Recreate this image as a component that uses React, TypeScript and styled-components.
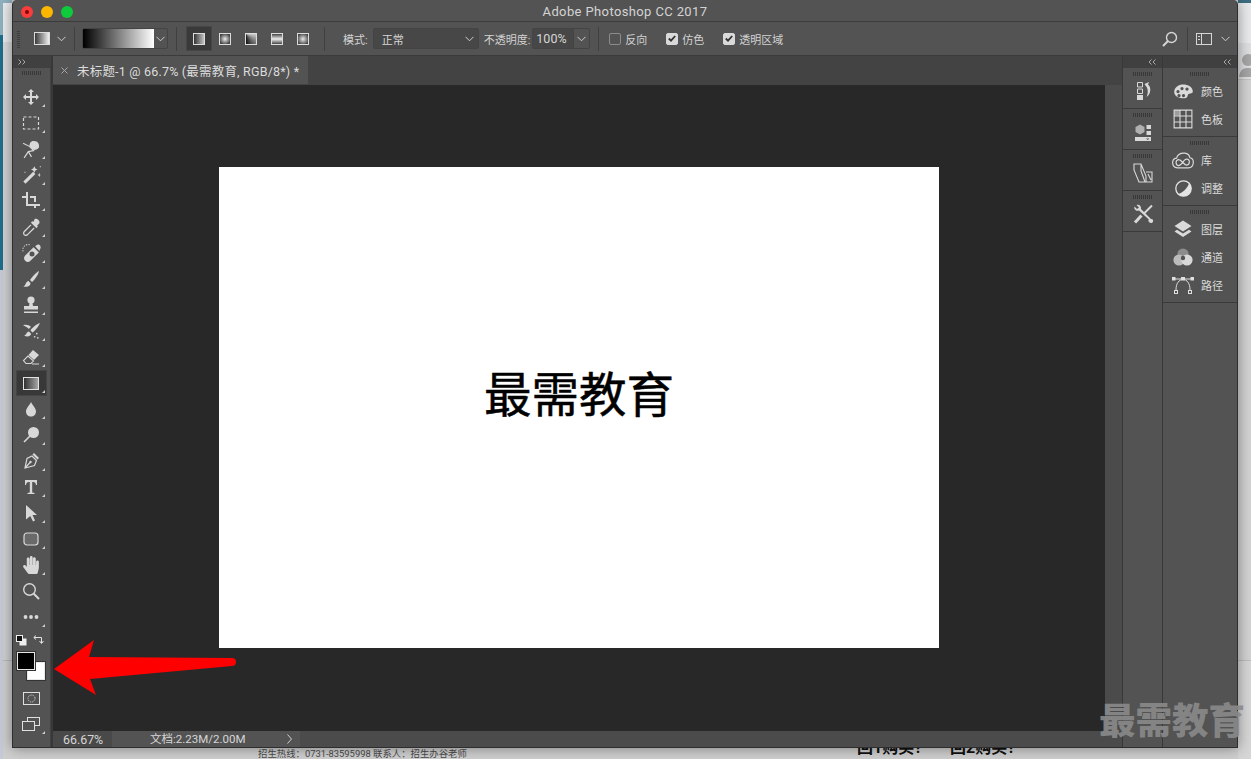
import React from 'react';
import styled, { createGlobalStyle } from 'styled-components';
import { FaHandPaper } from 'react-icons/fa';

const FONT = `Roboto, "Noto Sans CJK SC", sans-serif`;

const GlobalStyle = createGlobalStyle`
  html, body {
    margin: 0;
    padding: 0;
    width: 1251px;
    height: 759px;
    overflow: hidden;
    background: #d2d2d2;
    font-family: ${FONT};
  }
  * { box-sizing: border-box; }
`;

const Page = styled.div`
  position: relative;
  width: 1251px;
  height: 759px;
  overflow: hidden;
  display: grid;
  grid-template-columns: 12px 1226px 13px;
  grid-template-rows: 748px 11px;
`;

const LeftStrip = styled.div`
  grid-row: 1 / 3;
  display: flex;
`;

const StripColumn = styled.div<{ $w: number }>`
  width: ${(p) => p.$w}px;
  flex-shrink: 0;
  display: flex;
  flex-direction: column;
`;

const StripBand = styled.div<{ $h: number; $bg: string }>`
  height: ${(p) => p.$h}px;
  flex-shrink: 0;
  background: ${(p) => p.$bg};
`;

const RightStrip = styled.div`
  grid-column: 3;
  grid-row: 1 / 3;
  display: flex;
  flex-direction: column;
`;

const AvatarBand = styled.div`
  height: 37px;
  background: #dedfe0;
  border-bottom: 1px solid #c4c4c4;
  overflow: hidden;
  color: #a6a6a6;
`;

const Footer = styled.div`
  grid-column: 2;
  grid-row: 2;
  overflow: hidden;
  background: #cfcfcf;
  display: flex;
  align-items: flex-start;
  padding-left: 246px;
`;

const Hotline = styled.span`
  font-size: 9.4px;
  line-height: 11px;
  color: #4a4a4a;
  white-space: nowrap;
  width: 599px;
  flex-shrink: 0;
`;

const ClippedHeading = styled.span`
  font-size: 16px;
  line-height: 15px;
  font-weight: 700;
  color: #111;
  white-space: nowrap;
  margin-top: -8px;
  width: 93px;
  flex-shrink: 0;
`;

const Window = styled.div`
  position: relative;
  z-index: 1;
  grid-column: 2;
  grid-row: 1;
  background: #535353;
  border: 1px solid #2e2e2e;
  border-top: none;
  border-radius: 5px 5px 0 0;
  box-shadow: 0 0 14px rgba(0, 0, 0, 0.42);
  display: flex;
  flex-direction: column;
  color: #d6d6d6;
`;

const TitleBar = styled.div`
  height: 22px;
  flex-shrink: 0;
  border-bottom: 1px solid #3b3b3b;
  display: flex;
  align-items: center;
  justify-content: center;
  position: relative;
  padding-top: 1px;
  font-size: 13px;
  letter-spacing: 0.38px;
  color: #d4d4d4;
`;

const Lights = styled.div`
  position: absolute;
  left: 8px;
  top: 6px;
  display: flex;
  gap: 8px;
`;

const Light = styled.div<{ $c: string }>`
  width: 12px;
  height: 12px;
  border-radius: 50%;
  background: ${(p) => p.$c};
  display: flex;
  align-items: center;
  justify-content: center;
`;

const LightDot = styled.div`
  width: 4px;
  height: 4px;
  border-radius: 50%;
  background: #7a0a0a;
`;

const OptionsBar = styled.div`
  height: 34px;
  flex-shrink: 0;
  border-bottom: 1px solid #3b3b3b;
  display: flex;
  align-items: center;
  padding-left: 4px;
  font-size: 11px;
`;

const OptGrip = styled.div`
  width: 3px;
  height: 18px;
  margin-right: 14px;
  background: repeating-linear-gradient(0deg, #3e3e3e 0 1px, transparent 1px 2px);
`;

const PresetSwatch = styled.div`
  width: 16px;
  height: 13px;
  background: linear-gradient(90deg, #3a3a3a, #f0f0f0);
  border: 1px solid #dcdcdc;
`;

const Chevron = styled.svg<{ $ml?: number; $mr?: number }>`
  width: 9px;
  height: 6px;
  flex-shrink: 0;
  margin-left: ${(p) => p.$ml ?? 0}px;
  margin-right: ${(p) => p.$mr ?? 0}px;
  fill: none;
  stroke: #cfcfcf;
  stroke-width: 1;
`;

const Sep = styled.div<{ $ml: number; $mr: number }>`
  width: 1px;
  height: 24px;
  flex-shrink: 0;
  background: #404040;
  margin-left: ${(p) => p.$ml}px;
  margin-right: ${(p) => p.$mr}px;
`;

const GradientPicker = styled.div`
  width: 86px;
  height: 21px;
  border: 1px solid #444;
  border-radius: 2px;
  display: flex;
  align-items: center;
  overflow: hidden;
`;

const GradientFill = styled.div`
  width: 71px;
  height: 100%;
  background: linear-gradient(90deg, #000, #fff);
`;

const PickerArrow = styled.div`
  flex: 1;
  display: flex;
  align-items: center;
  justify-content: center;
`;

const GradType = styled.div<{ $active?: boolean }>`
  width: 26px;
  height: 25px;
  flex-shrink: 0;
  display: flex;
  align-items: center;
  justify-content: center;
  border-radius: 2px;
  background: ${(p) => (p.$active ? '#3a3a3a' : 'transparent')};
  box-shadow: ${(p) => (p.$active ? 'inset 0 0 0 1px #464646' : 'none')};
`;

const GradSwatch = styled.div<{ $kind: string }>`
  width: 12px;
  height: 12px;
  border: 1px solid #dcdcdc;
  background: ${(p) => p.$kind};
`;

const Label = styled.span<{ $ml?: number; $mr?: number }>`
  white-space: nowrap;
  flex-shrink: 0;
  color: #d2d2d2;
  margin-left: ${(p) => p.$ml ?? 0}px;
  margin-right: ${(p) => p.$mr ?? 0}px;
`;

const SelectBox = styled.div`
  width: 106px;
  height: 21px;
  flex-shrink: 0;
  background: #474747;
  border: 1px solid #444;
  border-radius: 2px;
  display: flex;
  align-items: center;
  justify-content: space-between;
  padding: 0 4px 0 8px;
`;

const Combo = styled.div`
  width: 58px;
  height: 21px;
  flex-shrink: 0;
  border: 1px solid #444;
  border-radius: 2px;
  display: flex;
  align-items: center;
`;

const ComboValue = styled.div`
  width: 41px;
  height: 100%;
  background: #474747;
  border-right: 1px solid #444;
  display: flex;
  align-items: center;
  padding-left: 3px;
  font-size: 12.5px;
`;

const CheckBox = styled.div<{ $on?: boolean }>`
  width: 12px;
  height: 12px;
  flex-shrink: 0;
  border-radius: 2px;
  border: 1px solid ${(p) => (p.$on ? '#d9d9d9' : '#8c8c8c')};
  background: ${(p) => (p.$on ? '#d9d9d9' : 'transparent')};
  margin-right: 4px;
  display: flex;
  align-items: center;
  justify-content: center;
`;

const Spacer = styled.div`
  flex: 1;
`;

const HeadIcon = styled.svg<{ $w: number }>`
  width: ${(p) => p.$w}px;
  height: 16px;
  flex-shrink: 0;
  fill: none;
  stroke: #d6d6d6;
  stroke-width: 1.4;
`;

const Main = styled.div`
  flex: 1;
  min-height: 0;
  display: flex;
  background: #383838;
`;

const Toolbar = styled.div`
  width: 38px;
  flex-shrink: 0;
  display: flex;
  flex-direction: column;
  background: #535353;
  border-right: 1px solid #424242;
  margin-right: 2px;
`;

const DockHeader = styled.div<{ $right?: boolean }>`
  height: 12px;
  flex-shrink: 0;
  background: #404040;
  display: flex;
  align-items: center;
  justify-content: ${(p) => (p.$right ? 'flex-end' : 'flex-start')};
  padding: 0 ${(p) => (p.$right ? 6 : 0)}px 0 ${(p) => (p.$right ? 0 : 5)}px;
`;

const Carets = styled.svg`
  width: 8px;
  height: 6px;
  fill: none;
  stroke: #a9a9a9;
  stroke-width: 1;
`;

const Grip = styled.div`
  width: 20px;
  height: 4px;
  flex-shrink: 0;
  align-self: center;
  background: repeating-linear-gradient(90deg, #383838 0 1px, transparent 1px 2px);
`;

const ToolGrip = styled(Grip)`
  margin: 3px auto 9px;
`;

const Tool = styled.div<{ $active?: boolean }>`
  position: relative;
  width: 31px;
  height: 26px;
  margin-left: 3px;
  padding-right: 1px;
  flex-shrink: 0;
  display: flex;
  align-items: center;
  justify-content: center;
  color: #d8d8d8;
  border-radius: 2px;
  background: ${(p) => (p.$active ? '#383838' : 'transparent')};
  box-shadow: ${(p) => (p.$active ? 'inset 0 0 0 1px #454545' : 'none')};
`;

const Corner = styled.span`
  position: absolute;
  right: 2px;
  bottom: 3px;
  width: 0;
  height: 0;
  border-style: solid;
  border-width: 0 0 3px 3px;
  border-color: transparent transparent #cfcfcf transparent;
`;

const Ico = styled.svg<{ $s?: number }>`
  width: ${(p) => p.$s ?? 20}px;
  height: ${(p) => p.$s ?? 20}px;
  fill: currentColor;
  stroke: none;
`;

const ColorTools = styled.div`
  display: flex;
  justify-content: space-between;
  align-items: center;
  padding: 0 6px 0 3px;
  margin-top: 4px;
  height: 12px;
  color: #dcdcdc;
`;

const SwatchStack = styled.div`
  position: relative;
  width: 28px;
  height: 28px;
  margin: 6px 0 0 4px;
`;

const Swatch = styled.div<{ $c: string; $top?: boolean }>`
  position: absolute;
  width: 18px;
  height: 18px;
  left: ${(p) => (p.$top ? 0 : 10)}px;
  top: ${(p) => (p.$top ? 0 : 10)}px;
  background: ${(p) => p.$c};
  border: 1px solid #e8e8e8;
  outline: 1px solid #333;
`;

const BottomTool = styled(Tool)<{ $mt: number }>`
  margin-top: ${(p) => p.$mt}px;
`;

const WorkArea = styled.div`
  flex: 1;
  min-width: 0;
  display: flex;
  flex-direction: column;
  margin-right: 1px;
`;

const TabBar = styled.div`
  height: 29px;
  flex-shrink: 0;
  background: #434343;
  display: flex;
`;

const Tab = styled.div`
  width: 256px;
  height: 28px;
  background: #535353;
  display: flex;
  align-items: center;
  padding-left: 8px;
  font-size: 12.5px;
  letter-spacing: 0.2px;
  white-space: nowrap;
  color: #dcdcdc;
  border-right: 1px solid #444;
`;

const TabClose = styled.svg`
  width: 7px;
  height: 7px;
  margin-right: 9px;
  fill: none;
  stroke: #a8a8a8;
  stroke-width: 1;
`;

const WorkBody = styled.div`
  flex: 1;
  min-height: 0;
  display: flex;
`;

const StageColumn = styled.div`
  width: 1052px;
  display: flex;
  flex-direction: column;
`;

const Stage = styled.div`
  flex: 1;
  min-height: 0;
  background: #282828;
  display: flex;
  align-items: center;
  justify-content: center;
  padding-bottom: 1px;
`;

const Doc = styled.div`
  width: 720px;
  height: 481px;
  background: #fff;
  color: #000;
  display: flex;
  align-items: center;
  justify-content: center;
  padding-bottom: 32px;
  font-size: 47.5px;
  font-weight: 400;
  -webkit-text-stroke: 0.5px #000;
  font-family: "Noto Sans CJK SC", sans-serif;
`;

const StatusBar = styled.div`
  height: 16px;
  flex-shrink: 0;
  background: #4b4b4b;
  display: flex;
  font-size: 11.5px;
  color: #d6d6d6;
`;

const ZoomField = styled.div`
  width: 59px;
  background: #494949;
  padding-left: 10px;
  line-height: 17px;
  font-size: 12.4px;
`;

const DocInfo = styled.div`
  width: 188px;
  background: #535353;
  display: flex;
  align-items: center;
  padding-left: 38px;
  line-height: 17px;
  justify-content: space-between;
  padding-right: 8px;
`;

const StatusCaret = styled.svg`
  width: 5px;
  height: 10px;
  fill: none;
  stroke: #cfcfcf;
  stroke-width: 1;
`;

const ScrollTrack = styled.div`
  flex: 1;
  background: #4b4b4b;
`;

const DockColumn = styled.div<{ $w: number; $mr?: number }>`
  width: ${(p) => p.$w}px;
  flex-shrink: 0;
  margin-right: ${(p) => p.$mr ?? 0}px;
  background: #535353;
  display: flex;
  flex-direction: column;
`;

const IconGroup = styled.div`
  height: 41px;
  flex-shrink: 0;
  border-bottom: 1px solid #3a3a3a;
  display: flex;
  flex-direction: column;
  align-items: center;
  padding-top: 4px;
  color: #d8d8d8;
`;

const GroupIcon = styled.div`
  height: 30px;
  display: flex;
  align-items: center;
  justify-content: center;
`;

const PanelGroup = styled.div<{ $h: number }>`
  height: ${(p) => p.$h}px;
  flex-shrink: 0;
  border-bottom: 1px solid #3a3a3a;
  display: flex;
  flex-direction: column;
  padding-top: 4px;
`;

const PanelRow = styled.div`
  height: 28px;
  flex-shrink: 0;
  display: flex;
  align-items: center;
  padding-left: 9px;
  font-size: 11px;
  color: #dcdcdc;
`;

const PanelIcon = styled.div`
  width: 22px;
  height: 20px;
  margin-right: 7px;
  display: flex;
  align-items: center;
  justify-content: center;
  color: #dadada;
`;

const GroupGrip = styled(Grip)`
  margin-bottom: 1px;
`;

const Watermark = styled.div`
  position: absolute;
  z-index: 3;
  left: 1099px;
  top: 697px;
  font-size: 36.5px;
  line-height: 44px;
  font-weight: 900;
  color: rgba(138, 138, 138, 0.92);
  font-family: "Noto Sans CJK SC", sans-serif;
  white-space: nowrap;
`;

const ArrowMark = styled.svg`
  position: absolute;
  z-index: 3;
  left: 50px;
  top: 636px;
  width: 192px;
  height: 64px;
`;

const ChevronPath = <path d="M0.5 0.8 L4.5 4.8 L8.5 0.8" />;

const tools: { id: string; icon: React.ReactNode; active?: boolean; noCorner?: boolean }[] = [
  { id: 'move', icon: <Ico viewBox="0 0 20 20"><path d="M10 2 L13 5 H11 V9 H15 V7 L18 10 L15 13 V11 H11 V15 H13 L10 18 L7 15 H9 V11 H5 V13 L2 10 L5 7 V9 H9 V5 H7 Z" /></Ico> },
  { id: 'marquee', icon: <Ico viewBox="0 0 20 20"><rect x="2.5" y="4" width="15" height="12" fill="none" stroke="currentColor" strokeWidth="1.2" strokeDasharray="3 2" /></Ico> },
  { id: 'lasso', icon: <Ico $s={21} viewBox="0 0 20 20"><path d="M11 2 C15 1 18 4 17 8 C16 10 13 11 11 10 L8 7 C8 4 9 3 11 2Z" /><path d="M2 4 L8 7 L12 11 L7 12 L3 18 M7 12 L10 17" fill="none" stroke="currentColor" strokeWidth="1.1" /></Ico> },
  { id: 'wand', icon: <Ico $s={22} viewBox="0 0 20 20"><path d="M3 16 L12 7 L14 9 L5 18 Z" /><path d="M13 2 L14 4 L16 5 L14 6 L13 8 L12 6 L10 5 L12 4Z M17.5 8 L18 9.5 L19 10 L18 10.5 L17.5 12 L17 10.5 L16 10 L17 9.5Z M18 2 h1 v1 h-1z M4 7 h1 v1 h-1z" /></Ico> },
  { id: 'crop', icon: <Ico viewBox="0 0 20 20"><path d="M5 1 H7 V13 H19 V15 H5 V7 H1 V5 H5Z M9 5 H15 V11 H13 V7 H9Z M15 17 H13 V15 H15Z" /></Ico> },
  { id: 'dropper', icon: <Ico $s={21} viewBox="0 0 20 20"><path d="M13 2 C15 0.5 18.5 3.5 17.5 6 L15.5 8 L16 9.5 L14.5 10.5 L9.5 5.5 L10.5 4 L12 4.5Z" /><path d="M9.5 7.5 L3 14 C2 15.5 2.5 17.5 4.5 17.5 C5 17.5 5.5 17.3 6 17 L12.5 10.5" fill="none" stroke="currentColor" strokeWidth="1.2" /></Ico> },
  { id: 'heal', icon: <Ico $s={21} viewBox="0 0 20 20"><path d="M12 4 L17 9 L9 17 C7.5 18.5 5.5 18.5 4 17 C2.5 15.5 2.5 13.5 4 12Z M15 2 C16 1 18 1.5 18.5 3 C19 4 18.5 5.5 18 6 L17.5 7.5 L13.5 3Z" /><circle cx="10.5" cy="10.5" r="2.4" fill="#535353" /><path d="M2 8 a5 5 0 0 1 7 -6" fill="none" stroke="currentColor" strokeWidth="1" strokeDasharray="1.2 1.2" /></Ico> },
  { id: 'brush', icon: <Ico viewBox="0 0 20 20"><path d="M18 2 C15.5 3 11 8 9 11 L11 13 C14 10.5 17.5 5 18 2Z" /><path d="M7.5 12 C5 12.5 5 15 4 16 C3.5 17 2.5 17.5 2 17.5 C5 18.5 9.5 17.5 9.5 14Z" /></Ico> },
  { id: 'stamp', icon: <Ico viewBox="0 0 20 20"><circle cx="10" cy="5" r="3.6" /><path d="M8.5 8 H11.5 L12 11 H17 V14.5 H3 V11 H8Z M3 16.5 H17 V18 H3Z" /></Ico> },
  { id: 'history', icon: <Ico $s={21} viewBox="0 0 20 20"><path d="M18 2 C15 3 10.5 6.5 9 9 L11 11 C13.5 9.5 17 5 18 2Z M7.5 10 C5 10.5 5.5 13 3 14 C6 15.5 10 14.5 9.5 12Z M2 4 C4.5 3 8 4 9.5 5.5 L7.5 7.5 C6 6 4 5 2 4Z" /><circle cx="15" cy="12" r="0.8" /><circle cx="13" cy="15" r="0.8" /><circle cx="16" cy="16" r="0.8" /></Ico> },
  { id: 'eraser', icon: <Ico viewBox="0 0 20 20"><path d="M12 3 L18 8 L13 13 L7.5 8Z" /><path d="M7 9 L12.5 14 L10 16.5 H5 L2.5 13.5Z M11 17 H18" fill="none" stroke="currentColor" strokeWidth="1.1" /></Ico> },
  { id: 'gradient', active: true, icon: <svg width="16" height="13"><defs><linearGradient id="tg"><stop offset="0" stopColor="#2d2d2d" /><stop offset="1" stopColor="#a9a9a9" /></linearGradient></defs><rect x="0.5" y="0.5" width="15" height="12" fill="url(#tg)" stroke="#e2e2e2" /></svg> },
  { id: 'blur', icon: <Ico viewBox="0 0 20 20"><path d="M10 3 C11.5 6.5 15 9 15 12.5 C15 15.5 12.7 17.5 10 17.5 C7.3 17.5 5 15.5 5 12.5 C5 9 8.5 6.5 10 3Z" /></Ico> },
  { id: 'dodge', icon: <Ico viewBox="0 0 20 20"><circle cx="12.5" cy="7.5" r="5.5" /><path d="M9 11 L3 17" fill="none" stroke="currentColor" strokeWidth="1.6" /></Ico> },
  { id: 'pen', icon: <Ico viewBox="0 0 20 20"><path d="M13 2 L18 7 L16.5 8.5 L11.5 3.5Z" /><path d="M11 5 L15.5 9.5 L13.5 14.5 L4 17 L6 7.5Z M4 17 L9 11.5" fill="none" stroke="currentColor" strokeWidth="1.2" /><circle cx="9.5" cy="11" r="1.2" /></Ico> },
  { id: 'type', icon: <Ico viewBox="0 0 20 20"><path d="M4 3 H16 V8 H15 C14.7 6 14 5 12 5 H11.2 V15.5 L13.5 16 V17 H6.5 V16 L8.8 15.5 V5 H8 C6 5 5.3 6 5 8 H4Z" /></Ico> },
  { id: 'select', icon: <Ico viewBox="0 0 20 20"><path d="M5 2 L16 12 H11.5 L14 17.5 L12 18.5 L9.3 13 L5 16.5Z" /></Ico> },
  { id: 'shape', icon: <Ico viewBox="0 0 20 20"><rect x="3" y="4" width="14" height="12" rx="3" fill="#6a6a6a" stroke="currentColor" strokeWidth="1.2" /></Ico> },
  { id: 'hand', icon: <FaHandPaper size={18} /> },
  { id: 'zoom', icon: <Ico viewBox="0 0 20 20"><circle cx="8.5" cy="8.5" r="5.8" fill="none" stroke="currentColor" strokeWidth="1.4" /><path d="M12.8 12.8 L18 18" stroke="currentColor" strokeWidth="2" /></Ico>, noCorner: true },
  { id: 'more', icon: <Ico viewBox="0 0 20 20"><circle cx="4.5" cy="10" r="1.9" /><circle cx="10" cy="10" r="1.9" /><circle cx="15.5" cy="10" r="1.9" /></Ico> },
];

const history = <Ico $s={22} viewBox="0 0 22 22"><path d="M5.5 2.5 H10.5 V7 H5.5Z M5.5 9 H10.5 V13.5 H5.5Z" fill="none" stroke="currentColor" /><rect x="5" y="15" width="6" height="5" /><path d="M12.5 4 L17 2 L16 4.5 C19.5 7 19 14 14.5 17 C16.5 13 16 8 14 6.2Z" /></Ico>;
const properties = <Ico $s={22} viewBox="0 0 22 22"><path d="M8 3.5 L12.5 6 V11 L8 13.5 L3.5 11 V6Z" opacity="0.7" /><rect x="14.5" y="4" width="4.5" height="4" /><rect x="14.5" y="10" width="4.5" height="4" /><path d="M3 16 H19 V20 H3Z M14 17.5 H17.5 L15.75 19Z" fillRule="evenodd" /></Ico>;
const transform = <Ico $s={24} viewBox="0 0 24 24"><path d="M3 3 H10 L15 15 V21 H8 L3 9Z M10 3 V10 L14 21 M15 11 H21 V21 H15 M17 13 L20 19" fill="none" stroke="currentColor" strokeWidth="1.1" /></Ico>;
const tweak = <Ico $s={22} viewBox="0 0 22 22"><path d="M2.5 3.5 L5 6 L7 4.5 L4.5 2 C7 1 9.5 3 9 6 L19 16 C20.5 15.5 21.5 17 21 18.5 C20.5 20.5 18 20.5 17 19 C16 18 16.5 17 16.8 16.5 L7 7.5 C4.5 8.5 1.5 6.5 2.5 3.5Z" /><path d="M20 2.5 L12 10.5" stroke="currentColor" strokeWidth="2" /><path d="M9.5 12.5 L3 19.5" stroke="currentColor" strokeWidth="3" /></Ico>;

const palette = <svg width="19" height="15" viewBox="0 0 19 15"><path fillRule="evenodd" fill="#dadada" d="M9 0.5 C14 0.5 18.8 3 18.8 7.5 C18.8 9.5 16 9.5 14.5 10 C13.5 10.5 14 13 12 14 C9 15 0.2 14 0.2 8 C0.2 3 5 0.5 9 0.5Z M4 6 a1.6 1.6 0 1 0 0.01 0Z M8 3 a1.6 1.6 0 1 0 0.01 0Z M13 3.5 a1.6 1.6 0 1 0 0.01 0Z M5 10 a1.6 1.6 0 1 0 0.01 0Z M9.5 10 a1.6 1.6 0 1 0 0.01 0Z" /></svg>;
const swatches = <Ico viewBox="0 0 18 18"><rect x="1" y="1" width="5" height="5" opacity="0.55" /><path d="M1 1 H17 V17 H1Z M6.3 1 V17 M11.7 1 V17 M1 6.3 H17 M1 11.7 H17" fill="none" stroke="currentColor" strokeWidth="1" /></Ico>;
const cloud = <svg width="22" height="17" viewBox="0 0 24 18" fill="none" stroke="currentColor" strokeWidth="1.3"><path d="M6 17 C2 17 0.5 14 0.7 11 C1 8 3 6.5 5 6.5 C6 2.5 10 0.7 14 1 C17 1.3 19 3.5 19.5 6 C22 6.5 23.5 8.5 23.2 11.5 C23 14.5 21 17 18 17Z" /><path d="M7 8 C10.5 7.5 13 14.5 16 14 C20 13.5 20 7 15.5 7.5 C12.5 8 10.5 14.5 7.5 14.5 C3.5 14.5 3.5 8.5 7 8Z" /></svg>;
const adjust = <svg width="17" height="17" viewBox="0 0 17 17"><circle cx="8.5" cy="8.5" r="7.7" fill="#535353" stroke="#e4e4e4" strokeWidth="1.3" /><path d="M14 3 A7.7 7.7 0 0 1 3 14 C7 13.5 13 8 14 3Z" fill="#e4e4e4" /></svg>;
const layers = <Ico viewBox="0 0 20 20"><path d="M10 1.5 L18.5 7 L10 12.5 L1.5 7Z" /><path d="M4 10.7 L10 14.5 L16 10.7 L18.5 12.5 L10 18 L1.5 12.5Z" /></Ico>;
const channels = <svg width="20" height="20" viewBox="0 0 20 20"><circle cx="10" cy="7" r="5.6" fill="#8c8c8c" /><circle cx="6" cy="13" r="5.6" fill="#bcbcbc" /><circle cx="14" cy="13" r="5.6" fill="#d8d8d8" /><circle cx="10" cy="11" r="2.2" fill="#535353" /></svg>;
const paths = <svg width="22" height="17" viewBox="0 0 22 17" fill="none" stroke="#e0e0e0" strokeWidth="1"><path d="M1 2 H21" /><path d="M4 13 C4 6 7 3 11 2 C15 3 18 6 18 13" /><rect x="0" y="0" width="3" height="3" fill="#e0e0e0" /><rect x="9.5" y="0" width="3" height="3" fill="#e0e0e0" /><rect x="19" y="0" width="3" height="3" fill="#e0e0e0" /><rect x="2.5" y="13.5" width="3" height="3" /><rect x="16.5" y="13.5" width="3" height="3" /></svg>;

const panelGroups = [
  { h: 69, rows: [{ icon: palette, label: '颜色' }, { icon: swatches, label: '色板' }] },
  { h: 69, rows: [{ icon: cloud, label: '库' }, { icon: adjust, label: '调整' }] },
  { h: 97, rows: [{ icon: layers, label: '图层' }, { icon: channels, label: '通道' }, { icon: paths, label: '路径' }] },
];

const gradKinds = [
  'linear-gradient(90deg, #333, #c4c4c4)',
  'radial-gradient(circle, #eee, #444 80%)',
  'conic-gradient(from 90deg at 0 0, #d0d0d0 0, #111 25%)',
  'linear-gradient(180deg, #444, #eee 50%, #444)',
  'radial-gradient(circle, #e8e8e8, #3c3c3c 90%)',
];

const LeftCarets = () => (
  <Carets viewBox="0 0 8 6"><path d="M3.5 0.5 L1 3 L3.5 5.5 M7.5 0.5 L5 3 L7.5 5.5" /></Carets>
);

function CheckMark() {
  return (
    <svg width="8" height="7" viewBox="0 0 8 7" fill="none" stroke="#333" strokeWidth="1.8">
      <path d="M0.8 3.5 L3 5.7 L7.2 1" />
    </svg>
  );
}

export default function App() {
  return (
    <Page>
      <GlobalStyle />
      <LeftStrip>
        <StripColumn $w={3}>
          <StripBand $h={35} $bg="#8fb0bf" />
          <StripBand $h={235} $bg="#1f6c8c" />
          <StripBand $h={489} $bg="#c6cad6" />
        </StripColumn>
        <StripColumn $w={9}>
          <StripBand $h={3} $bg="#8fb0bf" />
          <StripBand $h={39} $bg="#e9ebed" />
          <StripBand $h={38} $bg="#d8dadc" />
          <StripBand $h={580} $bg="#cfd0d2" />
          <StripBand $h={1} $bg="#b9b9b9" />
          <StripBand $h={98} $bg="#cfcfcf" />
        </StripColumn>
      </LeftStrip>

      <Window>
        <TitleBar>
          <Lights>
            <Light $c="#fc3b3b"><LightDot /></Light>
            <Light $c="#fdb700" />
            <Light $c="#0ecb3c" />
          </Lights>
          Adobe Photoshop CC 2017
        </TitleBar>

        <OptionsBar>
          <OptGrip />
          <PresetSwatch />
          <Chevron $ml={7} viewBox="0 0 9 6">{ChevronPath}</Chevron>
          <Sep $ml={8} $mr={7} />
          <GradientPicker>
            <GradientFill />
            <PickerArrow><Chevron viewBox="0 0 9 6">{ChevronPath}</Chevron></PickerArrow>
          </GradientPicker>
          <Sep $ml={8} $mr={9} />
          {gradKinds.map((k, i) => (
            <GradType key={k} $active={i === 0}><GradSwatch $kind={k} /></GradType>
          ))}
          <Sep $ml={8} $mr={18} />
          <Label $mr={5}>模式:</Label>
          <SelectBox>
            正常
            <Chevron viewBox="0 0 9 6">{ChevronPath}</Chevron>
          </SelectBox>
          <Label $ml={5} $mr={2}>不透明度:</Label>
          <Combo>
            <ComboValue>100%</ComboValue>
            <PickerArrow><Chevron viewBox="0 0 9 6">{ChevronPath}</Chevron></PickerArrow>
          </Combo>
          <Sep $ml={8} $mr={10} />
          <CheckBox />
          <Label $mr={19}>反向</Label>
          <CheckBox $on><CheckMark /></CheckBox>
          <Label $mr={19}>仿色</Label>
          <CheckBox $on><CheckMark /></CheckBox>
          <Label>透明区域</Label>
          <Spacer />
          <HeadIcon $w={16} viewBox="0 0 16 16"><circle cx="9.5" cy="6.5" r="5" /><path d="M6 10 L1 15" strokeWidth="2" /></HeadIcon>
          <Sep $ml={9} $mr={8} />
          <HeadIcon $w={16} viewBox="0 0 16 16"><rect x="0.5" y="2.5" width="15" height="11" strokeWidth="1" /><path d="M5.5 3 V13" strokeWidth="1" /><rect x="2" y="5" width="2" height="1" fill="#d6d6d6" stroke="none" /><rect x="2" y="8" width="2" height="1" fill="#d6d6d6" stroke="none" /></HeadIcon>
          <Chevron $ml={9} $mr={7} viewBox="0 0 9 6">{ChevronPath}</Chevron>
        </OptionsBar>

        <Main>
          <Toolbar>
            <DockHeader>
              <Carets viewBox="0 0 8 6"><path d="M0.5 0.5 L3 3 L0.5 5.5 M4.5 0.5 L7 3 L4.5 5.5" /></Carets>
            </DockHeader>
            <ToolGrip />
            {tools.map((t) => (
              <Tool key={t.id} $active={t.active}>
                {t.icon}
                {!t.noCorner && <Corner />}
              </Tool>
            ))}
            <ColorTools>
              <svg width="11" height="11" viewBox="0 0 11 11"><rect x="3.5" y="3.5" width="7" height="7" fill="#eee" /><rect x="0.5" y="0.5" width="6" height="6" fill="#111" stroke="#eee" /></svg>
              <svg width="11" height="11" viewBox="0 0 11 11" fill="none" stroke="#e4e4e4"><path d="M3 0.5 L0.8 2.5 L3 4.5 M1 2.5 H8.5 V8 M6.5 6 L8.5 8.5 L10.5 6" /></svg>
            </ColorTools>
            <SwatchStack>
              <Swatch $c="#fff" />
              <Swatch $c="#000" $top />
            </SwatchStack>
            <BottomTool $mt={5}>
              <svg width="17" height="13" viewBox="0 0 17 13" fill="none" stroke="#e0e0e0"><rect x="0.5" y="0.5" width="16" height="12" /><circle cx="8.5" cy="6.5" r="3.5" strokeDasharray="1 1" /></svg>
            </BottomTool>
            <BottomTool $mt={0}>
              <svg width="18" height="14" viewBox="0 0 18 14" fill="none" stroke="#e0e0e0"><rect x="5.5" y="0.5" width="12" height="8" /><rect x="0.5" y="4.5" width="12" height="9" fill="#535353" /></svg>
              <Corner />
            </BottomTool>
          </Toolbar>

          <WorkArea>
            <TabBar>
              <Tab>
                <TabClose viewBox="0 0 7 7"><path d="M0.5 0.5 L6.5 6.5 M6.5 0.5 L0.5 6.5" /></TabClose>
                未标题-1 @ 66.7% (最需教育, RGB/8*) *
              </Tab>
            </TabBar>
            <WorkBody>
              <StageColumn>
                <Stage>
                  <Doc>最需教育</Doc>
                </Stage>
                <StatusBar>
                  <ZoomField>66.67%</ZoomField>
                  <DocInfo>
                    <span>文档:2.23M/2.00M</span>
                    <StatusCaret viewBox="0 0 5 10"><path d="M0.5 0.5 L4.5 5 L0.5 9.5" /></StatusCaret>
                  </DocInfo>
                </StatusBar>
              </StageColumn>
              <ScrollTrack />
            </WorkBody>
          </WorkArea>

          <DockColumn $w={39} $mr={1}>
            <DockHeader $right><LeftCarets /></DockHeader>
            {[history, properties, transform, tweak].map((icon, i) => (
              <IconGroup key={i}>
                <Grip />
                <GroupIcon>{icon}</GroupIcon>
              </IconGroup>
            ))}
          </DockColumn>

          <DockColumn $w={74}>
            <DockHeader $right><LeftCarets /></DockHeader>
            {panelGroups.map((g) => (
              <PanelGroup key={g.rows[0].label} $h={g.h}>
                <GroupGrip />
                {g.rows.map((r) => (
                  <PanelRow key={r.label}>
                    <PanelIcon>{r.icon}</PanelIcon>
                    {r.label}
                  </PanelRow>
                ))}
              </PanelGroup>
            ))}
          </DockColumn>
        </Main>
      </Window>

      <Footer>
        <Hotline>招生热线：0731-83595998 联系人：招生办谷老师</Hotline>
        <ClippedHeading>回1购买?</ClippedHeading>
        <ClippedHeading>回2购买?</ClippedHeading>
      </Footer>

      <RightStrip>
        <StripBand $h={3} $bg="#3e6d83" />
        <StripBand $h={40} $bg="#e8eaec" />
        <AvatarBand>
          <svg width="13" height="36" viewBox="0 0 13 36" fill="currentColor"><circle cx="10" cy="17" r="6" /><path d="M1 34 C2 26 6 25 10 25 C14 25 18 26 19 34Z" /></svg>
        </AvatarBand>
        <StripBand $h={580} $bg="#d2d2d2" />
        <StripBand $h={1} $bg="#bdbdbd" />
        <StripBand $h={98} $bg="#d6d6d6" />
      </RightStrip>

      <ArrowMark viewBox="0 0 192 64">
        <path d="M4 33 L44 4 L39 21 L182 22 A4 4 0 0 1 182 30 L40 43 L46 59 Z" fill="#fe0000" />
      </ArrowMark>
      <Watermark>最需教育</Watermark>
    </Page>
  );
}
